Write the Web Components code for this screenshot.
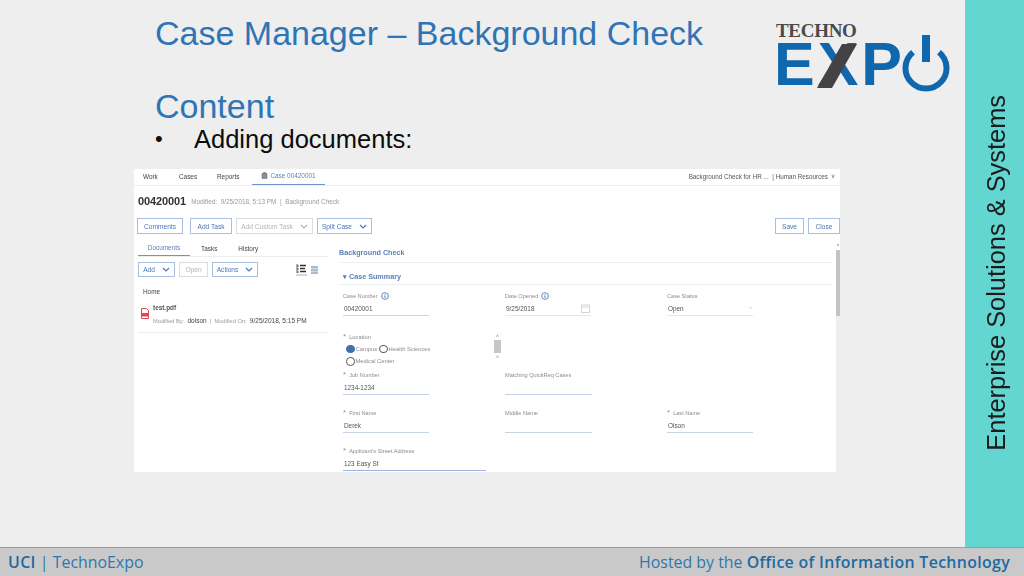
<!DOCTYPE html>
<html lang="en">
<head>
<meta charset="utf-8">
<title>Case Manager - Background Check</title>
<style>
  html, body { margin: 0; padding: 0; background: #eeeeee; }
</style>
</head>
<body>
<slide-page>
  <slide-heading slot="heading"></slide-heading>
  <techno-logo slot="logo"></techno-logo>
  <case-app slot="shot"></case-app>
</slide-page>

<script>
// Small helper so every component sets its shadow root the same way
class Base extends HTMLElement {
  render(html) {
    if (!this.shadowRoot) this.attachShadow({ mode: 'open' });
    this.shadowRoot.innerHTML = html;
  }
}

const CHEVRON = `<svg width="8" height="5" viewBox="0 0 8 5"><path d="M1 1l3 3 3-3" fill="none" stroke="currentColor" stroke-width="1.1"/></svg>`;
const INFO = `<svg width="8" height="8" viewBox="0 0 8 8"><circle cx="4" cy="4" r="3.4" fill="none" stroke="#3d70b2" stroke-width=".8"/><path d="M4 3.4v2.6M4 2v.8" stroke="#3d70b2" stroke-width=".9"/></svg>`;

// Slide frame: content, side band and footer
class SlidePage extends Base {
  connectedCallback() {
    this.render(`
      <style>
        :host {
          display: grid;
          grid-template-columns: 965px 59px;
          grid-template-rows: 547px 29px;
          width: 1024px;
          height: 576px;
          overflow: hidden;
          font-family: "Liberation Sans", Arial, sans-serif;
          background: #eeeeee;
        }
        .main { padding-left: 134px; }
        .top { display: flex; align-items: flex-start; }
        .titles { width: 621px; margin-left: 21px; flex: none; }
        .shot { margin-top: 17px; }
        .band {
          background: #64d6d2;
          display: flex;
          align-items: flex-start;
          justify-content: center;
        }
        .band span {
          writing-mode: vertical-rl;
          transform: rotate(180deg);
          font-size: 25.4px;
          line-height: 30px;
          color: #1b1b1b;
          margin-top: 95px;
          margin-left: 2px;
          white-space: nowrap;
        }
        slide-footer { grid-column: 1 / 3; }
      </style>
      <div class="main">
        <div class="top">
          <div class="titles"><slot name="heading"></slot></div>
          <slot name="logo"></slot>
        </div>
        <div class="shot"><slot name="shot"></slot></div>
      </div>
      <div class="band"><span>Enterprise Solutions &amp; Systems</span></div>
      <slide-footer></slide-footer>
    `);
  }
}

class SlideHeading extends Base {
  connectedCallback() {
    this.render(`
      <style>
        :host { display: block; padding-top: 13px; }
        h1 {
          margin: 0;
          font: 400 34px/40px "Liberation Sans", Arial, sans-serif;
          color: #2f75b5;
          white-space: nowrap;
        }
        .content { margin-top: 33px; }
        .bullet {
          display: flex;
          font: 400 25.5px/26px "Liberation Sans", Arial, sans-serif;
          color: #0c0c0c;
        }
        .bullet i { font-style: normal; width: 39px; flex: none; font-size: 22px; }
      </style>
      <h1>Case Manager – Background Check</h1>
      <h1 class="content">Content</h1>
      <div class="bullet"><i>•</i><span>Adding documents:</span></div>
    `);
  }
}

// Logo: the wording is live text, only the power mark is drawn
class TechnoLogo extends Base {
  connectedCallback() {
    this.render(`
      <style>
        :host {
          display: block;
          width: 176px;
          margin-top: 21px;
          flex: none;
        }
        .techno {
          font: 700 19px/19px "Liberation Serif", serif;
          color: #4a4a4c;
          letter-spacing: -.3px;
        }
        .row { display: flex; align-items: flex-start; height: 50px; }
        .expo {
          position: relative;
          font: 700 61px/48px "Liberation Sans", Arial, sans-serif;
          color: #0f67ae;
          letter-spacing: 3px;
          width: 126px;
          height: 48px;
          margin-left: -2px;
          flex: none;
        }
        .slash {
          position: absolute;
          left: 39px;
          top: 4px;
        }
        svg.power { margin-left: 1.5px; margin-top: -9px; flex: none; }
      </style>
      <div class="techno">TECHNO</div>
      <div class="row">
        <div class="expo">EXP<svg class="slash" width="50" height="44" viewBox="0 0 50 44"><polygon points="29,0 44,0 19,44 4,44" fill="#434345"/></svg></div>
        <svg class="power" width="48" height="62" viewBox="0 0 48 62">
          <path d="M11 21.2A20.5 20.5 0 1 0 37 21.2" fill="none" stroke="#0f67ae" stroke-width="6"/>
          <rect x="20" y="4" width="8" height="27" fill="#0f67ae"/>
        </svg>
      </div>
    `);
  }
}

class SlideFooter extends Base {
  connectedCallback() {
    this.render(`
      <style>
        :host {
          display: flex;
          justify-content: space-between;
          align-items: center;
          box-sizing: border-box;
          height: 29px;
          background: #c9c9c9;
          border-top: 1px solid #9d9d9d;
          padding: 0 14px 0 8px;
          font-family: "Open Sans", "Liberation Sans", sans-serif;
          font-size: 15.9px;
          color: #2e78ab;
          white-space: nowrap;
        }
        b { font-weight: 600; color: #1f6a9f; letter-spacing: .33px; }
      </style>
      <div><b>UCI</b> | TechnoExpo</div>
      <div>Hosted by the <b>Office of Information Technology</b></div>
    `);
  }
}

class UiButton extends Base {
  connectedCallback() {
    const off = this.hasAttribute('off');
    this.render(`
      <style>
        :host {
          display: flex;
          align-items: center;
          justify-content: center;
          gap: 7px;
          box-sizing: border-box;
          height: 16px;
          width: ${this.getAttribute('w')}px;
          border: 1px solid ${off ? '#dcdcdc' : '#a9bfe0'};
          color: ${off ? '#b4b4b4' : '#4a76b8'};
          font-size: 6.6px;
          white-space: nowrap;
          flex: none;
        }
        svg { display: block; }
      </style>
      <slot></slot>${this.hasAttribute('caret') ? CHEVRON : ''}
    `);
  }
}

class FormField extends Base {
  connectedCallback() {
    const label = this.getAttribute('label');
    const value = this.getAttribute('value') || '';
    const w = this.getAttribute('w') || 86;
    const req = this.hasAttribute('req');
    this.render(`
      <style>
        :host { display: block; font-size: 5.6px; color: #8c8c8c; }
        .label { display: flex; align-items: center; gap: 3px; height: 11px; white-space: nowrap; }
        .req { color: #e0803a; font-size: 8px; line-height: 8px; margin-top: 1px; }
        .value {
          display: flex;
          justify-content: space-between;
          align-items: center;
          box-sizing: border-box;
          width: ${w}px;
          height: 15px;
          padding: 1px 1px 1px;
          font-size: 6.4px;
          color: #555;
          border-bottom: 1px solid ${this.getAttribute('line') || '#c6d2e8'};
        }
      </style>
      <div class="label">${req ? '<span class="req">*</span>' : ''}<span>${label}</span>${this.hasAttribute('info') ? INFO : ''}</div>
      <div class="value"><span>${value}</span><slot></slot></div>
    `);
  }
}

// Location radios with their own little scrollbar
class RadioBox extends Base {
  connectedCallback() {
    this.render(`
      <style>
        :host { display: block; width: 159px; height: 35px; font-size: 5.8px; color: #8c8c8c; position: relative; overflow: hidden; }
        .label { height: 12px; display: flex; gap: 3px; align-items: center; }
        .req { color: #e0803a; font-size: 8px; line-height: 8px; margin-top: 1px; }
        .line { display: flex; align-items: center; height: 12.5px; padding-left: 3px; white-space: nowrap; }
        .dot { width: 8.5px; height: 8.5px; border-radius: 50%; border: 1px solid #555; box-sizing: border-box; margin-right: 1px; margin-left: 2px; flex: none; }
        .dot.on { background: #3d70b2; border-color: #3d70b2; }
        .dot:first-child { margin-left: 0; }
        .bar { position: absolute; right: 1px; top: 2px; width: 7px; height: 30px; display: flex; flex-direction: column; align-items: center; color: #777; font-size: 5px; line-height: 6px; }
        .bar i { display: block; width: 7px; height: 13px; background: #c6c6c6; margin: 1px 0; }
      </style>
      <div class="label"><span class="req">*</span><span>Location</span></div>
      <div class="line"><span class="dot on"></span>Campus<span class="dot"></span>Health Sciences</div>
      <div class="line"><span class="dot"></span>Medical Center</div>
      <div class="bar"><span>˄</span><i></i><span>˅</span></div>
    `);
  }
}

// The Case Manager screenshot embedded in the slide
class CaseApp extends Base {
  connectedCallback() {
    this.render(`
      <style>
        :host {
          display: block;
          width: 706px;
          height: 303px;
          overflow: hidden;
          background: #fff;
          font-family: "Liberation Sans", Arial, sans-serif;
          filter: blur(.5px);
        }
        .nav {
          display: flex;
          align-items: center;
          height: 17px;
          box-sizing: border-box;
          padding: 0 0 1px 9px;
          border-bottom: 1px solid #eceef2;
          font-size: 6.4px;
          color: #444;
          white-space: nowrap;
        }
        .nav span { flex: none; }
        .nav .t1 { width: 36px; }
        .nav .t2 { width: 38px; }
        .nav .t3 { width: 35px; }
        .nav .active {
          display: flex;
          align-items: center;
          justify-content: center;
          gap: 2px;
          width: 73px;
          height: 17px;
          box-sizing: border-box;
          padding-bottom: 1px;
          border-bottom: 1px solid #6f93ca;
          color: #5a82bd;
        }
        .nav .right { margin-left: auto; padding-right: 5px; color: #555; font-size: 6.3px; }
        .head { display: flex; align-items: center; height: 30px; padding: 0 0 2px 4px; color: #9a9a9a; font-size: 6.4px; white-space: nowrap; }
        .head b { font-size: 11px; color: #333; margin-right: 5px; letter-spacing: -.1px; }
        .actions { display: flex; gap: 4px; padding-left: 3px; height: 16px; }
        .actions .gap { flex: 1; }
        .split { display: grid; grid-template-columns: 202px 1fr 4px; height: 238px; margin-top: 6px; }
        .left { padding-left: 4px; }
        .tabs { display: flex; height: 16px; font-size: 6.4px; color: #444; border-bottom: 1px solid #eee; width: 190px; align-items: center; }
        .tabs .on { width: 52px; height: 16px; box-sizing: border-box; display: flex; align-items: center; justify-content: center; color: #5a82bd; border-bottom: 1px solid #6f93ca; flex: none; }
        .tabs .t { margin-left: 11px; }
        .tabs .t + .t { margin-left: 21px; }
        .tools { display: flex; align-items: center; gap: 4px; margin-top: 5px; height: 15px; }
        .tools ui-button { height: 15px; }
        .tools svg { flex: none; }
        .home { font-size: 6.4px; color: #444; height: 13px; line-height: 13px; margin: 8px 0 0 5px; }
        .doc { display: flex; gap: 4px; width: 190px; height: 31px; box-sizing: border-box; border-bottom: 1px solid #eee; padding: 1px 0 0 3px; margin-top: 4px; }
        .doc svg { margin-top: 5px; flex: none; }
        .doc .name { font-size: 6.4px; font-weight: 700; color: #555; line-height: 10px; }
        .doc .meta { font-size: 5.7px; color: #999; line-height: 12px; white-space: nowrap; margin-top: 2px; }
        .doc .meta b { font-size: 6.5px; font-weight: 400; color: #444; }
        .right-pane { padding-left: 3px; }
        .bg-title { height: 23px; line-height: 26px; box-sizing: border-box; font-size: 7.2px; font-weight: 700; color: #5d80b6; border-bottom: 1px solid #f0f0f0; margin-right: 4px; }
        .summary { height: 22px; line-height: 27px; box-sizing: border-box; font-size: 7.2px; font-weight: 700; color: #5d80b6; border-bottom: 1px solid #f0f0f0; margin-right: 4px; padding-left: 4px; }
        .form { display: grid; grid-template-columns: 162px 162px 1fr; padding: 5px 0 0 4px; grid-template-rows: 39.5px 39.5px 38px 38px 38px; }
        .form .radio { grid-column: 1 / 4; margin-top: 1px; }
        .gutter { background: #eeeeee; }
        .gutter .cap { height: 10px; background: #fff; color: #777; font-size: 5px; line-height: 10px; text-align: center; }
        .gutter i { display: block; height: 66px; background: #c3c3c3; }
      </style>
      <div class="nav">
        <span class="t1">Work</span><span class="t2">Cases</span><span class="t3">Reports</span>
        <span class="active">
          <svg width="7" height="7" viewBox="0 0 7 7"><path d="M1 1.5h5V6.5H1zM2.5 1.5V.5h2v1" fill="#8a8f96" stroke="#666" stroke-width=".5"/></svg>
          Case 00420001
        </span>
        <span class="right">Background Check for HR ... &nbsp;| Human Resources &nbsp;˅</span>
      </div>
      <div class="head"><b>00420001</b>Modified: &nbsp;9/25/2018, 5:13 PM &nbsp;| &nbsp;Background Check</div>
      <div class="actions">
        <ui-button w="46">Comments</ui-button>
        <ui-button w="42" style="margin-left:3px">Add Task</ui-button>
        <ui-button w="77" off caret>Add Custom Task</ui-button>
        <ui-button w="55" caret>Split Case</ui-button>
        <span class="gap"></span>
        <ui-button w="29">Save</ui-button>
        <ui-button w="32">Close</ui-button>
      </div>
      <div class="split">
        <div class="left">
          <div class="tabs"><span class="on">Documents</span><span class="t">Tasks</span><span class="t">History</span></div>
          <div class="tools">
            <ui-button w="37" caret>Add</ui-button>
            <ui-button w="29" off>Open</ui-button>
            <ui-button w="46" caret>Actions</ui-button>
            <svg style="margin-left:34px" width="11" height="13" viewBox="0 0 11 13"><path d="M1 1v9M1 3h2M1 6h2M1 9h2" stroke="#333" stroke-width=".8" fill="none"/><path d="M4 2.5h6M4 5.5h5M4 8.5h6" stroke="#333" stroke-width="1.4"/><path d="M0 12h11" stroke="#999" stroke-width=".8"/></svg>
            <svg width="7" height="8" viewBox="0 0 7 8"><path d="M0 0h7v8H0z" fill="#a9bad6"/><path d="M0 2.6h7M0 5.3h7" stroke="#fff" stroke-width=".5"/></svg>
          </div>
          <div class="home">Home</div>
          <div class="doc">
            <svg width="8" height="11" viewBox="0 0 8 11"><path d="M.5.5h5l2 2v8H.5z" fill="#fff" stroke="#d84a5a"/><path d="M1 5h6v3.5H1z" fill="#d84a5a"/></svg>
            <div>
              <div class="name">test.pdf</div>
              <div class="meta">Modified By: &nbsp;<b>dolson</b> &nbsp;| &nbsp;Modified On: &nbsp;<b>9/25/2018, 5:15 PM</b></div>
            </div>
          </div>
        </div>
        <div class="right-pane">
          <div class="bg-title">Background Check</div>
          <div class="summary">▾ Case Summary</div>
          <div class="form">
            <form-field label="Case Number" value="00420001" info></form-field>
            <form-field label="Date Opened" value="9/25/2018" info line="#e8e8e8">
              <svg width="9" height="9" viewBox="0 0 9 9"><path d="M.5 1h8v7.5h-8zM.5 3h8" fill="none" stroke="#c4c4c4" stroke-width=".7"/></svg>
            </form-field>
            <form-field label="Case Status" value="Open" line="#e8e8e8"><span style="color:#bbb;font-size:5px">˅</span></form-field>
            <div class="radio"><radio-box></radio-box></div>
            <form-field label="Job Number" value="1234-1234" req></form-field>
            <form-field label="Matching QuickReq Cases" w="87"></form-field>
            <span></span>
            <form-field label="First Name" value="Derek" req></form-field>
            <form-field label="Middle Name" w="87"></form-field>
            <form-field label="Last Name" value="Olson" req></form-field>
            <form-field label="Applicant's Street Address" value="123 Easy St" req w="143" line="#9db6de"></form-field>
          </div>
        </div>
        <div class="gutter"><div class="cap">˄</div><i></i></div>
      </div>
    `);
  }
}

// Registro de los componentes
customElements.define('slide-page', SlidePage);
customElements.define('slide-heading', SlideHeading);
customElements.define('techno-logo', TechnoLogo);
customElements.define('slide-footer', SlideFooter);
customElements.define('ui-button', UiButton);
customElements.define('form-field', FormField);
customElements.define('radio-box', RadioBox);
customElements.define('case-app', CaseApp);
</script>
</body>
</html>
